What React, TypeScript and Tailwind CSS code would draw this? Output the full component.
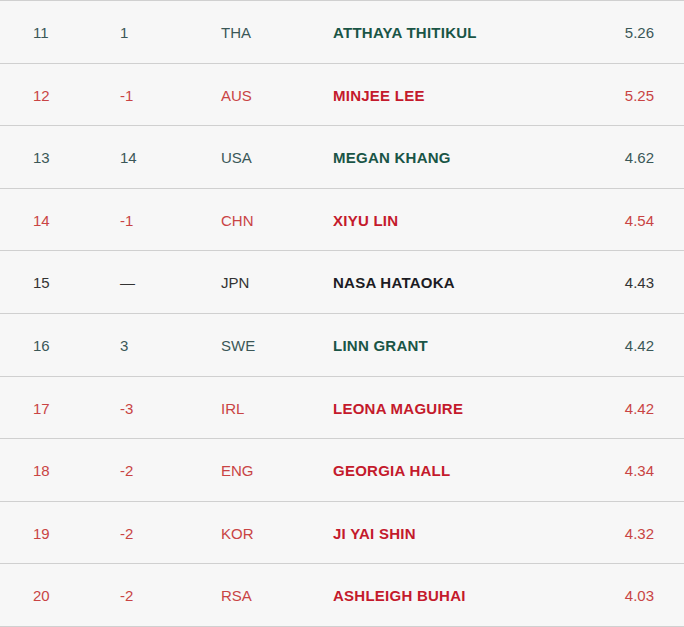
import React from 'react';

type Tone = 'green' | 'red' | 'black';

const rows: { rank: number; move: string; country: string; name: string; points: string; tone: Tone }[] = [
  { rank: 11, move: '1', country: 'THA', name: 'ATTHAYA THITIKUL', points: '5.26', tone: 'green' },
  { rank: 12, move: '-1', country: 'AUS', name: 'MINJEE LEE', points: '5.25', tone: 'red' },
  { rank: 13, move: '14', country: 'USA', name: 'MEGAN KHANG', points: '4.62', tone: 'green' },
  { rank: 14, move: '-1', country: 'CHN', name: 'XIYU LIN', points: '4.54', tone: 'red' },
  { rank: 15, move: '—', country: 'JPN', name: 'NASA HATAOKA', points: '4.43', tone: 'black' },
  { rank: 16, move: '3', country: 'SWE', name: 'LINN GRANT', points: '4.42', tone: 'green' },
  { rank: 17, move: '-3', country: 'IRL', name: 'LEONA MAGUIRE', points: '4.42', tone: 'red' },
  { rank: 18, move: '-2', country: 'ENG', name: 'GEORGIA HALL', points: '4.34', tone: 'red' },
  { rank: 19, move: '-2', country: 'KOR', name: 'JI YAI SHIN', points: '4.32', tone: 'red' },
  { rank: 20, move: '-2', country: 'RSA', name: 'ASHLEIGH BUHAI', points: '4.03', tone: 'red' }
];

const textTone = {
  green: 'text-[#3b5757]',
  red: 'text-[#c94444]',
  black: 'text-[#333333]'
};

const nameTone = {
  green: 'text-[#1a5546]',
  red: 'text-[#c41a2c]',
  black: 'text-[#1c1c24]'
};

const App = () => {
  return (
    <div className="w-[684px] h-[627px] overflow-hidden bg-[#f7f7f7] font-['Liberation_Sans',Arial,sans-serif] text-[15px]">
      <div className="border-t border-[#d0d0d0]">
        {rows.map((row) => (
          <div
            key={row.rank}
            className={`box-border h-[62.6px] border-b border-[#d0d0d0] grid grid-cols-[87px_101px_112px_1fr_auto] items-center pl-[33px] pr-[30px] pt-[3px] ${textTone[row.tone]}`}
          >
            <span>{row.rank}</span>
            <span>{row.move}</span>
            <span>{row.country}</span>
            <span className={`font-bold tracking-[0.25px] ${nameTone[row.tone]}`}>{row.name}</span>
            <span className="text-right">{row.points}</span>
          </div>
        ))}
      </div>
    </div>
  );
};

export default App;
